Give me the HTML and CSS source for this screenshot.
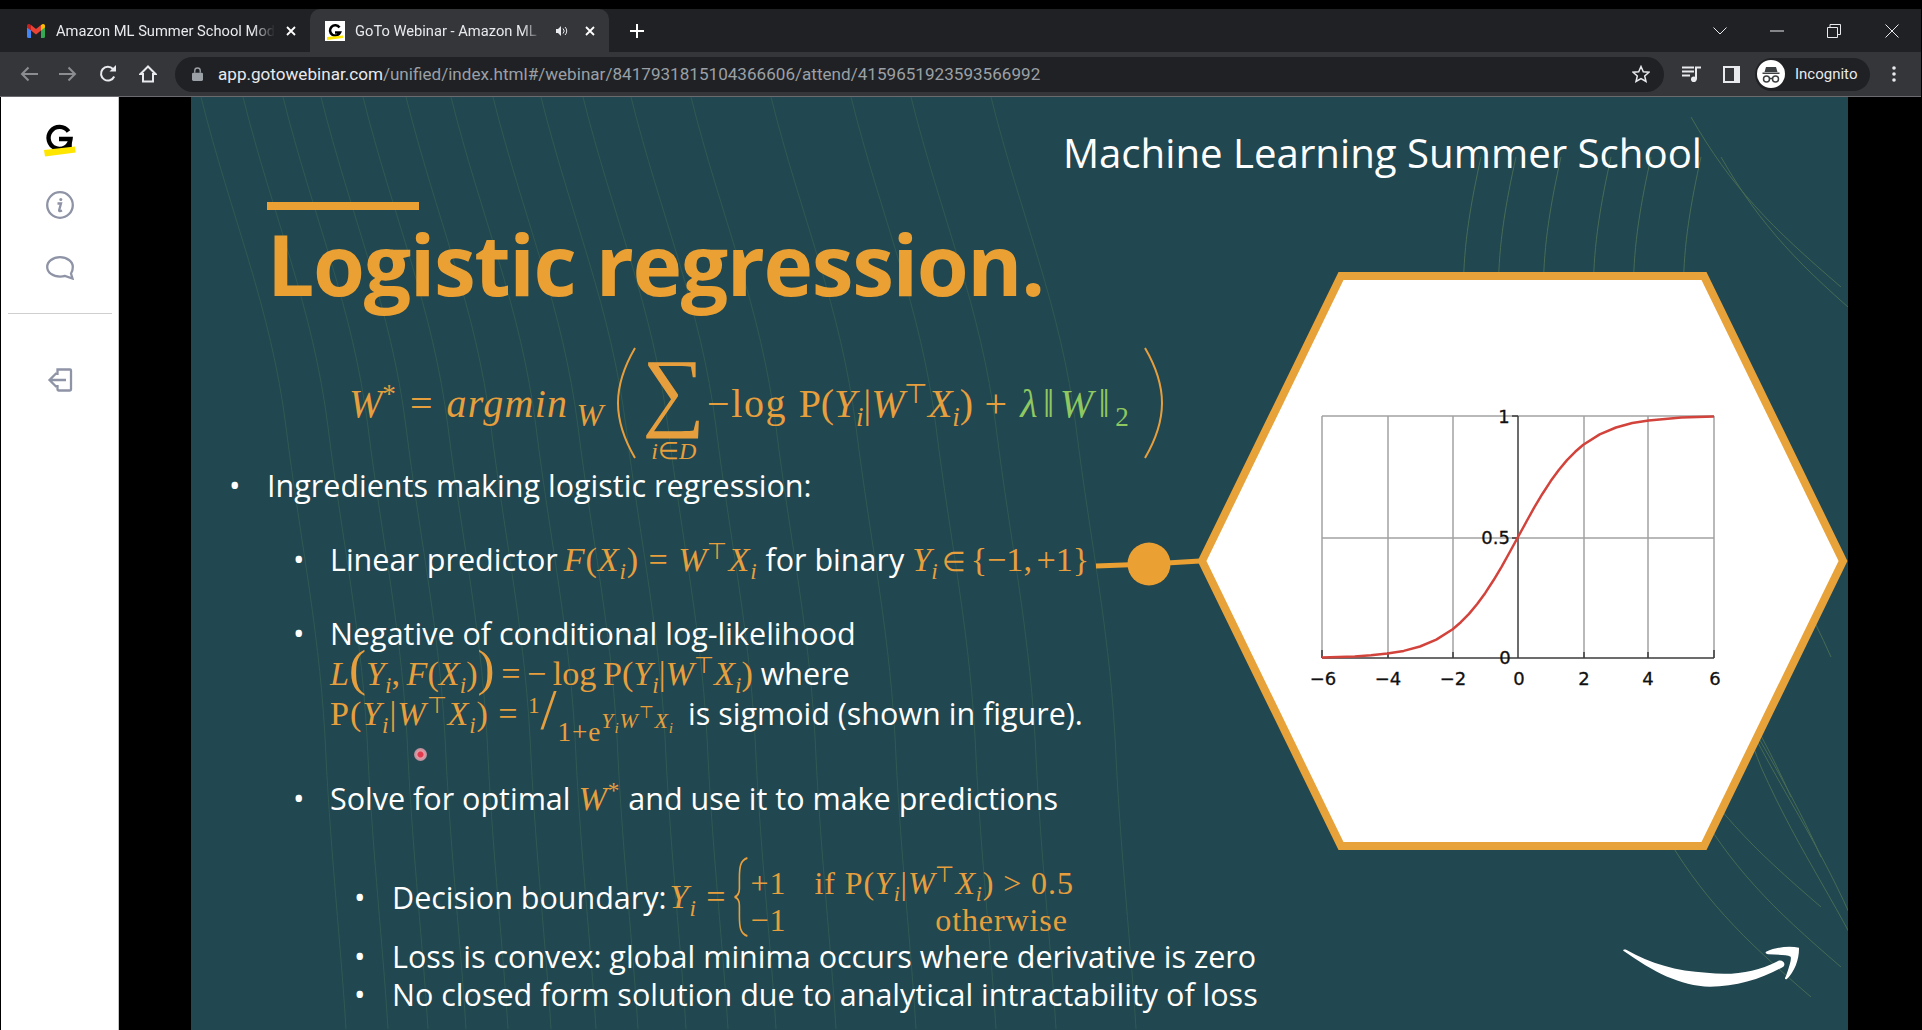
FILE: index.html
```html
<!DOCTYPE html>
<html lang="en">
<head>
<meta charset="utf-8">
<title>GoTo Webinar - Amazon ML Summer School</title>
<link rel="stylesheet" href="styles.css">
</head>
<body>
<div class="window">
  <header class="tabstrip">
    <div class="tab">
      <svg class="fav-gmail" viewBox="0 0 18 14"><path d="M0 3v9.5A1.5 1.5 0 0 0 1.500 14H4V6z" fill="#4285f4"/><path d="M18 3v9.500a1.500 1.500 0 0 1-1.500 1.500H14V6z" fill="#34a853"/><path d="M14 1v5.500L18 3.500V1.800C18 .3 16.300-.5 15 .5z" fill="#fbbc04"/><path d="M4 6.500V1l5 4 5-4v5.500l-5 4z" fill="#ea4335"/><path d="M0 1.800v1.700l4 3V1L3 .5C1.700-.5 0 .3 0 1.800z" fill="#c5221f"/></svg>
      <span class="tab-title">Amazon ML Summer School Module</span>
      <svg class="tab-close" viewBox="0 0 10 10"><path d="M1 1l8 8M9 1l-8 8"/></svg>
    </div>
    <div class="tab tab-active">
      <svg class="fav-goto" viewBox="0 0 20 20"><rect width="20" height="20" fill="#fff"/><path d="M14.500 6.500A5.200 5.200 0 1 0 15 11.500H10" fill="none" stroke="#000" stroke-width="2.600"/><path d="M2 19l16-2v-2.500L2 16z" fill="#ffe600"/></svg>
      <span class="tab-title">GoTo Webinar - Amazon ML Summer</span>
      <svg class="tab-audio" viewBox="0 0 12 12"><path d="M0 4h2l3-3v10L2 8H0z" fill="#e8eaed"/><path d="M7 3.500a3.500 3.500 0 0 1 0 5M9 2a5.500 5.500 0 0 1 0 8" fill="none" stroke="#e8eaed"/></svg>
      <svg class="tab-close" viewBox="0 0 10 10"><path d="M1 1l8 8M9 1l-8 8"/></svg>
    </div>
    <svg class="new-tab" viewBox="0 0 14 14"><path d="M7 0v14M0 7h14"/></svg>
    <div class="window-controls">
      <svg class="win-btn win-chevron" viewBox="0 0 14 8"><path d="M.5 .5L7 7l6.500-6.500"/></svg>
      <svg class="win-btn win-min" viewBox="0 0 14 2"><path d="M0 1h14"/></svg>
      <svg class="win-btn win-restore" viewBox="0 0 14 14"><path d="M.5 3.500h10v10H.500zM3 3.500V.5h10.500v10h-3"/></svg>
      <svg class="win-btn win-close" viewBox="0 0 14 14"><path d="M.5 .5l13 13M13.500 .5l-13 13"/></svg>
    </div>
  </header>

  <nav class="toolbar">
    <svg class="tool tool-back" viewBox="0 0 18 16"><path d="M18 8H2M8.500 1.500L2 8l6.500 6.500"/></svg>
    <svg class="tool tool-fwd" viewBox="0 0 18 16"><path d="M0 8h16M9.500 1.500L16 8l-6.500 6.500"/></svg>
    <svg class="tool tool-reload" viewBox="0 0 18 18"><path d="M15.200 11.500A6.900 6.900 0 1 1 14 4"/><path class="solid" d="M10.500 6.500H17V0z"/></svg>
    <svg class="tool tool-home" viewBox="0 0 18 18"><path d="M9 1.500L1.500 9H4v7.500h10V9h2.500z"/></svg>
    <div class="omnibox">
      <svg class="lock" viewBox="0 0 12 15"><path d="M3 6V4a3 3 0 0 1 6 0v2" fill="none" stroke="#9aa0a6" stroke-width="1.500"/><rect y="6" width="12" height="9" rx="1.500" fill="#9aa0a6"/></svg>
      <span class="url"><span class="url-host">app.gotowebinar.com</span>/unified/index.html#/webinar/8417931815104366606/attend/4159651923593566992</span>
      <svg class="star" viewBox="0 0 18 18"><path d="M9 1.500l2.300 5.200 5.700.5-4.300 3.700 1.300 5.600L9 13.600 4 16.500l1.300-5.600L1 7.200l5.700-.5z"/></svg>
    </div>
    <svg class="tool-queue" viewBox="0 0 20 16"><path d="M0 1.500h12M0 5.500h12M0 9.500h8" stroke="#e8eaed" stroke-width="1.800"/><path d="M14 13.500V1.500h5" fill="none" stroke="#e8eaed" stroke-width="2"/><circle cx="11.800" cy="13.200" r="2.800" fill="#e8eaed"/></svg>
    <svg class="tool-panel" viewBox="0 0 17 17"><path fill-rule="evenodd" d="M0 0h17v17H0zM2 2v13h9V2z" fill="#e8eaed"/></svg>
    <div class="profile">
      <svg class="avatar" viewBox="0 0 28 28"><circle cx="14" cy="14" r="14" fill="#fff"/><path d="M9 7h10l1.500 5H7.500zM5.500 12.500h17v1.500h-17z" fill="#3c4043"/><circle cx="9.500" cy="19" r="3" fill="none" stroke="#3c4043" stroke-width="1.500"/><circle cx="18.500" cy="19" r="3" fill="none" stroke="#3c4043" stroke-width="1.500"/><path d="M12.500 18.500h3" stroke="#3c4043" stroke-width="1.500"/></svg>
      <span class="profile-name">Incognito</span>
    </div>
    <svg class="tool-menu" viewBox="0 0 4 16"><circle cx="2" cy="2" r="1.800"/><circle cx="2" cy="8" r="1.800"/><circle cx="2" cy="14" r="1.800"/></svg>
  </nav>

  <main class="stage">
    <aside class="sidebar">
      <svg class="side-logo" viewBox="0 0 34 36"><path d="M25.500 8.500A11 11 0 1 0 27.500 16H16" fill="none" stroke="#000" stroke-width="4.400"/><path d="M27 16v9h-4" fill="none" stroke="#000" stroke-width="3.600"/><path d="M1 27l31-3.500.7 6L2 33.500z" fill="#ffe600"/></svg>
      <svg class="side-icon side-info" viewBox="0 0 28 28"><circle cx="14" cy="14" r="12.800"/><circle class="fill" cx="14.800" cy="8.500" r="1.500"/><path d="M11.500 12.500h3.500l-1.800 6.500c-.3 1.200.7 1.500 2.800.5"/></svg>
      <svg class="side-icon side-chat" viewBox="0 0 28 24"><path d="M14 1.200C7 1.200 1.200 5.300 1.200 11S7 20.600 14 20.600c1.800 0 3.500-.2 5-.7L26.500 22.500 25 17.500C26.100 15.800 26.800 13.500 26.800 11 26.800 5.300 21 1.200 14 1.200z"/></svg>
      <hr class="side-rule">
      <svg class="side-icon side-exit" viewBox="0 0 26 24"><path d="M10.500 7V1.500H23a1 1 0 0 1 1 1v19a1 1 0 0 1-1 1H11.500a1 1 0 0 1-1-1V17M19 12H2.500M9.500 5L2.500 12l7 7"/></svg>
    </aside>

    <section class="slide">
      <svg class="waves" viewBox="0 0 1657 932" preserveAspectRatio="none">
        <defs>
          <path id="wa" d="M0 0C30 120 70 210 85 330C100 450 120 540 125 660C130 760 140 850 145 932"/>
          <path id="wb" d="M0 0C-20 90 -30 170 10 270C50 360 90 410 130 500"/>
          <path id="wc" d="M0 0C40 70 80 110 150 170"/>
        </defs>
        <use href="#wa" x="10"/><use href="#wa" x="52"/><use href="#wa" x="92"/><use href="#wa" x="130"/><use href="#wa" x="172"/><use href="#wa" x="215"/><use href="#wa" x="260"/><use href="#wa" x="302"/><use href="#wa" x="350"/><use href="#wa" x="392"/><use href="#wa" x="440"/><use href="#wa" x="500"/><use href="#wa" x="580"/><use href="#wa" x="660"/><use href="#wa" x="720"/><use href="#wa" x="800"/>
        <g class="waves-bright">
          <use href="#wb" x="1290" y="60"/><use href="#wb" x="1325" y="60"/><use href="#wb" x="1370" y="60"/><use href="#wb" x="1420" y="60"/><use href="#wb" x="1460" y="60"/><use href="#wb" x="1510" y="60"/><use href="#wb" x="1470" y="200"/><use href="#wb" x="1500" y="260"/><use href="#wb" x="1530" y="320"/><use href="#wb" x="1560" y="400"/>
          <use href="#wc" x="1500" y="20"/><use href="#wc" x="1530" y="60"/><use href="#wc" x="1480" y="640"/><use href="#wc" x="1500" y="700"/><use href="#wc" x="1470" y="730"/>
        </g>
      </svg>

      <p class="brand">Machine Learning Summer School</p>
      <div class="accent-bar"></div>
      <h1 class="title">Logistic regression.</h1>

      <div class="formula">
        <span class="m"><i>W</i><sup>*</sup></span>
        <span class="m eq">=</span>
        <span class="m argmin"><i>argmin</i><sub><i>W</i></sub></span>
        <svg class="big-paren paren-start" viewBox="0 0 20 112"><path d="M19 1C5 25 2 45 2 56S5 87 19 111"/></svg>
        <span class="sum"><span class="sum-sign">∑</span><span class="sum-under"><i>i</i>∈<i>D</i></span></span>
        <span class="m wide">−log <span class="narrow">P(<i>Y</i><sub><i>i</i></sub>|<i>W</i><sup class="t">⊤</sup><i>X</i><sub><i>i</i></sub>)</span> + <span class="green"><i>λ</i>‖<i>W</i>‖<sub>2</sub></span></span>
        <svg class="big-paren paren-end" viewBox="0 0 20 112"><path d="M1 1C15 25 18 45 18 56S15 87 1 111"/></svg>
      </div>

      <ul class="points">
        <li class="lvl1 p-ingredients"><span>Ingredients making logistic regression:</span></li>
        <li class="lvl2 p-linear"><span>Linear predictor <span class="m pull"><i>F</i>(<i>X</i><sub><i>i</i></sub>) = <i>W</i><sup class="t">⊤</sup><i>X</i><sub><i>i</i></sub></span> for binary <span class="m tight"><i>Y</i><sub><i>i</i></sub> <span class="el">∈</span> {−1, +1}</span></span></li>
        <li class="lvl2 p-negative">
          <div>
            <div>Negative of conditional log-likelihood</div>
            <div class="sub-line"><span class="m tight"><i>L</i><span class="tall">(</span><i>Y</i><sub><i>i</i></sub>, <i>F</i>(<i>X</i><sub><i>i</i></sub>)<span class="tall">)</span> = − log P(<i>Y</i><sub><i>i</i></sub>|<i>W</i><sup class="t">⊤</sup><i>X</i><sub><i>i</i></sub>)</span> where</div>
            <div class="sub-line sub-frac"><span class="m">P(<i>Y</i><sub><i>i</i></sub>|<i>W</i><sup class="t">⊤</sup><i>X</i><sub><i>i</i></sub>) = <sup class="num">1</sup><span class="slash">/</span><span class="denom">1+e<sup><i>Y</i><sub><i>i</i></sub><i>W</i><sup>⊤</sup><i>X</i><sub><i>i</i></sub></sup></span></span><span class="frac-gap">is sigmoid (shown in figure).</span></div>
          </div>
        </li>
        <li class="lvl2 p-solve"><span>Solve for optimal <span class="m"><i>W</i><sup>*</sup></span> and use it to make predictions</span></li>
        <li class="lvl3 p-decision">
          <div class="decision"><span>Decision boundary:</span> <span class="m"><i>Y</i><sub><i>i</i></sub> =</span>
            <svg class="brace" viewBox="0 0 20 76" preserveAspectRatio="none"><path d="M18 1C9 3 8 10 8 20V30C8 34 6 37 2 38 6 39 8 42 8 46V56C8 66 9 73 18 75"/></svg>
            <div class="cases m">
              <span>+1</span><span>if P(<i>Y</i><sub><i>i</i></sub>|<i>W</i><sup class="t">⊤</sup><i>X</i><sub><i>i</i></sub>) &gt; 0.5</span>
              <span>−1</span><span class="otherwise">otherwise</span>
            </div>
          </div>
        </li>
        <li class="lvl3 p-loss"><span>Loss is convex: global minima occurs where derivative is zero</span></li>
        <li class="lvl3 p-closed"><span>No closed form solution due to analytical intractability of loss</span></li>
      </ul>

      <svg class="figure" viewBox="1090 262 770 600">
        <path class="conn" d="M1096 566L1150 564L1200 561"/>
        <circle class="dot" cx="1149" cy="564" r="21.500"/>
        <path class="hex" d="M1341 276H1704L1843 561L1704 846H1341L1202 561Z"/>
        <g class="grid">
          <path d="M1322 416V658M1388 416V658M1453 416V658M1584 416V658M1648 416V658M1714 416V658M1322 416H1714M1322 538H1714"/>
        </g>
        <path class="axis" d="M1322 658H1714M1518 416V658M1512 416H1518M1512 538H1518M1512 658H1518M1322 650V658M1388 652V658M1453 652V658M1584 652V658M1648 652V658M1714 650V658"/>
        <polyline class="curve" points="1322,657.400 1354.700,656.400 1371,655.300 1387.300,653.600 1403.700,650.900 1420,646.500 1436.300,639.600 1452.700,629.200 1460.800,622.200 1469,613.900 1477.200,604 1485.300,592.900 1493.500,580.300 1501.700,566.600 1509.800,552 1518,537 1526.200,522 1534.300,507.400 1542.500,493.700 1550.700,481.100 1558.800,470 1567,460.100 1575.200,451.800 1583.300,444.800 1599.700,434.400 1616,427.500 1632.300,423 1648.700,420.400 1681.300,417.600 1714,416.600"/>
        <g class="tick">
          <text x="1504" y="423" text-anchor="middle">1</text>
          <text x="1510" y="544" text-anchor="end">0.5</text>
          <text x="1505" y="664" text-anchor="middle">0</text>
          <text x="1323" y="685" text-anchor="middle">−6</text>
          <text x="1388" y="685" text-anchor="middle">−4</text>
          <text x="1453" y="685" text-anchor="middle">−2</text>
          <text x="1519" y="685" text-anchor="middle">0</text>
          <text x="1584" y="685" text-anchor="middle">2</text>
          <text x="1648" y="685" text-anchor="middle">4</text>
          <text x="1715" y="685" text-anchor="middle">6</text>
        </g>
      </svg>

      <span class="laser"></span>

      <svg class="smile" viewBox="0 0 1086 390">
        <path d="M190 152C280 215 360 258 450 260C530 260 610 235 670 200C680 190 665 175 650 185C590 215 520 228 440 218C350 214 270 190 200 150C194 147 188 149 190 152Z"/>
        <path d="M618 155C650 140 690 138 717 143C718 175 705 215 680 238C672 238 675 232 678 228C686 205 695 180 692 170C680 163 650 165 625 163C617 162 615 158 618 155Z"/>
      </svg>
    </section>
    <div class="stage-end"></div>
  </main>
</div>
</body>
</html>
```

FILE: styles.css
```css
* { box-sizing: border-box; }
html, body { margin: 0; padding: 0; height: 100%; background: #000; overflow: hidden; }
body { font-family: "Roboto", "Liberation Sans", sans-serif; }
.window { width: 1922px; height: 1030px; display: flex; flex-direction: column; background: #000; padding-top: 9px; }

/* tab strip */
.tabstrip { height: 43px; flex: none; display: flex; align-items: center; background: #202124; margin-right: 1px; }
.tab { height: 43px; display: flex; align-items: center; color: #e8eaed; font-size: 14.700px; }
.tab:first-child { width: 310px; padding-left: 27px; }
.tab-active { width: 299px; background: #35363a; border-radius: 10px 10px 0 0; padding-left: 15px; }
.fav-gmail { width: 18px; height: 14px; margin-right: 11px; flex: none; }
.fav-goto { width: 20px; height: 20px; margin-right: 10px; flex: none; }
.tab-title { display: block; white-space: nowrap; overflow: hidden; width: 219px; -webkit-mask-image: linear-gradient(to right, #000 90%, transparent); mask-image: linear-gradient(to right, #000 90%, transparent); }
.tab-active .tab-title { width: 186px; }
.tab-close { width: 10px; height: 10px; margin-left: 11px; flex: none; fill: none; stroke: #fff; stroke-width: 1.800; }
.tab-active .tab-close { margin-left: 17px; }
.tab-audio { width: 12px; height: 12px; margin-left: 15px; flex: none; }
.new-tab { width: 14px; height: 14px; margin-left: 21px; fill: none; stroke: #fff; stroke-width: 2; flex: none; }
.window-controls { margin-left: auto; display: flex; align-items: center; padding-right: 22px; }
.win-btn { fill: none; stroke: #e8eaed; stroke-width: 1; flex: none; }
.win-chevron { width: 14px; height: 8px; margin-right: 43px; }
.win-min { width: 14px; height: 2px; margin-right: 43px; }
.win-restore { width: 14px; height: 14px; margin-right: 44px; }
.win-close { width: 14px; height: 14px; }

/* toolbar */
.toolbar { height: 45px; flex: none; display: flex; align-items: center; background: #35363a; border-bottom: 1px solid #6a6b6e; margin-right: 1px; padding-left: 20px; }
.tool { width: 18px; height: 18px; fill: none; stroke: #e8eaed; stroke-width: 2; flex: none; }
.tool-back, .tool-fwd { stroke: #8b8d91; }
.tool-fwd { margin-left: 21px; }
.tool-reload { margin-left: 22px; }
.tool-reload .solid { fill: #e8eaed; stroke: none; }
.tool-home { margin-left: 22px; }
.omnibox { margin-left: 18px; width: 1489px; height: 35px; border-radius: 18px; background: #202124; display: flex; align-items: center; padding-left: 17px; padding-right: 14px; flex: none; }
.lock { width: 11px; height: 14px; flex: none; }
.url { margin-left: 15px; font-size: 17.100px; color: #9aa0a6; white-space: nowrap; }
.url-host { color: #e8eaed; }
.star { width: 18px; height: 18px; margin-left: auto; fill: none; stroke: #e8eaed; stroke-width: 1.500; }
.tool-queue { width: 20px; height: 16px; margin-left: 18px; flex: none; }
.tool-panel { width: 17px; height: 17px; margin-left: 21px; flex: none; }
.profile { margin-left: 15px; width: 115px; height: 33px; border-radius: 17px; background: #202124; display: flex; align-items: center; padding-left: 2px; flex: none; }
.avatar { width: 28px; height: 28px; flex: none; }
.profile-name { margin-left: 10px; font-size: 15px; color: #e8eaed; }
.tool-menu { width: 4px; height: 16px; margin-left: 22px; fill: #e8eaed; flex: none; }

/* stage */
.stage { flex: 1; display: flex; min-height: 0; }
.sidebar { width: 118px; margin-left: 1px; flex: none; background: #fff; border-right: 1px solid #c4c4c4; display: flex; flex-direction: column; align-items: center; padding-top: 26px; }
.side-logo { width: 34px; height: 36px; flex: none; }
.side-icon { fill: none; stroke: #8e93a6; stroke-width: 2.300; flex: none; }
.side-icon .fill { fill: #8e93a6; stroke: none; }
.side-info { width: 28px; height: 28px; margin-top: 32px; }
.side-chat { width: 28px; height: 24px; margin-top: 37px; }
.side-rule { width: 104px; height: 1px; border: 0; background: #cfcfcf; margin: 33px 0 0; flex: none; }
.side-exit { width: 26px; height: 24px; margin-top: 54px; }

.slide { margin-left: 72px; width: 1657px; flex: none; position: relative; overflow: hidden; background: #214750; font-family: "Open Sans", "Noto Sans", sans-serif; color: #fff; }
.stage-end { flex: 1; background: #000; }
.waves { position: absolute; left: 0; top: 0; width: 1657px; height: 932px; fill: none; stroke: #3f6b55; stroke-width: 1; opacity: .5; }
.waves-bright { stroke: #6d8f5a; }

.brand { position: relative; margin: 30px 146px 0 0; text-align: right; font-size: 40.200px; line-height: 52px; }
.accent-bar { position: relative; width: 152px; height: 8px; margin: 23px 0 0 76px; background: #eba033; }
.title { position: relative; margin: 8px 0 0 76px; font-size: 84px; line-height: 92px; font-weight: 700; letter-spacing: -1.400px; color: #eba033; white-space: nowrap; }

.m { font-family: "Liberation Serif", serif; color: #e79f3d; white-space: nowrap; font-size: 1.120em; letter-spacing: .9px; }
.m sub, .m sup { font-size: .68em; line-height: 0; }
.t { font-style: normal; }
.green { color: #8fc860; }
.pull { margin-left: -2px; }
.tight { letter-spacing: 0; word-spacing: -4px; }
.sub-line .tight { word-spacing: -2px; }
.el { font-size: .8em; }
.formula { position: relative; margin: 37px 0 0 158px; height: 112px; display: flex; align-items: center; font-size: 36px; }
.formula .m { font-size: 40px; letter-spacing: 0; }
.formula .wide { letter-spacing: 1.600px; }
.formula .narrow { letter-spacing: -.2px; }
.formula .green { letter-spacing: 5.500px; }
.formula .argmin { letter-spacing: 1.300px; }
.formula .argmin sub { font-size: .8em; margin-left: 8px; }
.eq { margin: 0 14px; }
.big-paren { width: 20px; height: 112px; fill: none; stroke: #e79f3d; stroke-width: 2; flex: none; margin: 0 10px; }
.paren-start { margin: 0 6px 0 12px; }
.paren-end { margin-left: 10px; }
.sum { display: flex; flex-direction: column; align-items: center; color: #e79f3d; font-family: "Liberation Serif", serif; margin-right: 2px; height: 112px; flex: none; }
.sum-sign { font-size: 88px; line-height: 80px; margin-top: 4px; }
.sum-under { font-size: 24px; line-height: 24px; margin-top: 8px; }

.points { position: relative; list-style: none; margin: 0; padding: 0; font-size: 30.500px; line-height: 38px; }
.points li { display: flex; white-space: nowrap; }
.points li::before { content: "•"; flex: none; display: block; }
.lvl1 { margin-left: 38px; }
.lvl1::before { width: 38px; }
.lvl2 { margin-left: 102px; }
.lvl2::before { width: 37px; }
.lvl3 { margin-left: 163px; }
.lvl3::before { width: 38px; }
.p-ingredients { margin-top: 7px; }
.p-linear { margin-top: 36px; }
.p-negative { margin-top: 33px; }
.sub-line { margin-top: 2px; }
.sub-frac { margin-top: 1px; }
.p-solve { margin-top: 46px; }
.p-decision { margin-top: 41px; align-items: center; }
.p-loss { margin-top: 2px; }
.tall { font-size: 1.500em; line-height: 0; font-weight: 400; }
.num { font-size: .6em; }
.slash { font-size: 1.700em; line-height: 0; vertical-align: -4px; }
.denom { font-size: .8em; line-height: 0; vertical-align: -16px; }
.denom sup { font-size: .8em; vertical-align: .6em; }
.denom sub { font-size: .7em; }
.frac-gap { margin-left: 14px; }
.decision { display: flex; align-items: center; gap: 3px; height: 76px; }
.brace { width: 16px; height: 80px; margin: -2px -2px -2px 4px; fill: none; stroke: #e79f3d; stroke-width: 2; flex: none; }
.cases { display: grid; grid-template-columns: 64px auto; line-height: 37px; font-size: 32px; margin-top: 9px; }
.otherwise { text-align: right; padding-right: 6px; }

.figure { position: absolute; left: 899px; top: 165px; width: 770px; height: 600px; }
.conn { fill: none; stroke: #eba033; stroke-width: 5; }
.dot { fill: #eba033; }
.hex { fill: #fff; stroke: #e8a23a; stroke-width: 8; }
.grid path { fill: none; stroke: #a2a2a2; stroke-width: 1.500; }
.axis { fill: none; stroke: #3c3c3c; stroke-width: 1.500; }
.curve { fill: none; stroke: #d2433c; stroke-width: 2.500; stroke-linejoin: round; }
.tick text { font-family: "DejaVu Sans", sans-serif; font-size: 18px; fill: #111; stroke: #111; stroke-width: .3; }

.laser { position: absolute; left: 223px; top: 651px; width: 13px; height: 13px; border-radius: 50%; background: radial-gradient(circle, #e23a4c 0 28%, #e69aa4 38%, #ad8f9c 75%, transparent); }
.smile { position: absolute; left: 1369px; top: 803px; width: 362px; height: 130px; fill: #fff; }
```
